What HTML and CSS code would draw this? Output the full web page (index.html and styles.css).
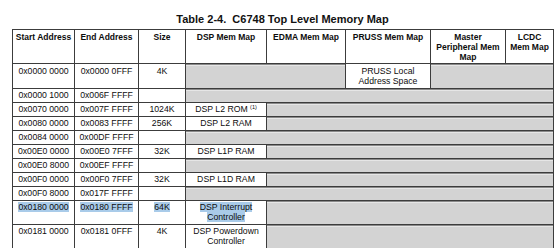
FILE: index.html
```html
<!DOCTYPE html>
<html>
<head>
<meta charset="utf-8">
<link rel="stylesheet" href="styles.css">
</head>
<body>
<div class="wrap">
  <div class="title">Table 2-4.&nbsp; C6748 Top Level Memory Map</div>
  <table class="map">
    <colgroup>
      <col class="c1"><col class="c2"><col class="c3"><col class="c4"><col class="c5"><col class="c6"><col class="c7"><col class="c8">
    </colgroup>
    <thead>
      <tr>
        <th>Start Address</th>
        <th>End Address</th>
        <th>Size</th>
        <th>DSP Mem Map</th>
        <th>EDMA Mem Map</th>
        <th>PRUSS Mem Map</th>
        <th>Master<br>Peripheral Mem<br>Map</th>
        <th>LCDC<br>Mem Map</th>
      </tr>
    </thead>
    <tbody>
      <tr class="first">
        <td>0x0000 0000</td><td>0x0000 0FFF</td><td>4K</td>
        <td class="g" colspan="2"></td>
        <td>PRUSS Local<br>Address Space</td>
        <td class="g" colspan="2"></td>
      </tr>
      <tr>
        <td>0x0000 1000</td><td>0x006F FFFF</td><td></td>
        <td class="g" colspan="5"></td>
      </tr>
      <tr>
        <td>0x0070 0000</td><td>0x007F FFFF</td><td>1024K</td>
        <td>DSP L2 ROM <sup class="fn">(1)</sup></td>
        <td class="g" colspan="4"></td>
      </tr>
      <tr>
        <td>0x0080 0000</td><td>0x0083 FFFF</td><td>256K</td>
        <td>DSP L2 RAM</td>
        <td class="g" colspan="4"></td>
      </tr>
      <tr>
        <td>0x0084 0000</td><td>0x00DF FFFF</td><td></td>
        <td class="g" colspan="5"></td>
      </tr>
      <tr>
        <td>0x00E0 0000</td><td>0x00E0 7FFF</td><td>32K</td>
        <td>DSP L1P RAM</td>
        <td class="g" colspan="4"></td>
      </tr>
      <tr>
        <td>0x00E0 8000</td><td>0x00EF FFFF</td><td></td>
        <td class="g" colspan="5"></td>
      </tr>
      <tr>
        <td>0x00F0 0000</td><td>0x00F0 7FFF</td><td>32K</td>
        <td>DSP L1D RAM</td>
        <td class="g" colspan="4"></td>
      </tr>
      <tr>
        <td>0x00F0 8000</td><td>0x017F FFFF</td><td></td>
        <td class="g" colspan="5"></td>
      </tr>
      <tr>
        <td><span class="sel">0x0180 0000</span></td><td><span class="sel">0x0180 FFFF</span></td><td><span class="sel">64K</span></td>
        <td><span class="sel">DSP Interrupt</span><br><span class="sel">Controller</span></td>
        <td class="g" colspan="4"></td>
      </tr>
      <tr>
        <td>0x0181 0000</td><td>0x0181 0FFF</td><td>4K</td>
        <td>DSP Powerdown<br>Controller</td>
        <td class="g" colspan="4"></td>
      </tr>
    </tbody>
  </table>
</div>
</body>
</html>
```

FILE: styles.css
```css
html, body {
  margin: 0;
  padding: 0;
  background: #ffffff;
}

.wrap {
  padding: 13px 0 0 12px;
  width: 541px;
  font-family: "Liberation Sans", Arial, sans-serif;
  color: #0d0d0d;
}

.title {
  font-size: 11px;
  line-height: 13px;
  font-weight: bold;
  text-align: center;
  color: #111;
  margin-bottom: 3px;
}

.map {
  border-collapse: collapse;
  table-layout: fixed;
  width: 541px;
}

.c1 { width: 62px; }
.c2 { width: 64px; }
.c3 { width: 47px; }
.c4 { width: 81px; }
.c5 { width: 79px; }
.c6 { width: 85px; }
.c7 { width: 75px; }
.c8 { width: 48px; }

.map th,
.map td {
  border: 1px solid #3c3c3c;
  padding: 1px 2px 2px;
  text-align: center;
  vertical-align: top;
  line-height: 10px;
  white-space: nowrap;
  overflow: hidden;
}

.map th {
  font-size: 8.5px;
  font-weight: bold;
  color: #0d0d0d;
  padding-top: 2px;
  padding-bottom: 1px;
  height: 29px;
}

.map td {
  font-size: 8.7px;
  height: 10px;
}

.map tr.first td {
  padding-top: 2px;
}

.map td.g {
  background: #d3d3d3;
  border-top: 1px solid #555;
  box-shadow: inset 0 1px 0 #8a8a8a, inset 0 2px 0 #e6e6e6;
}

.fn {
  font-size: 5.5px;
  vertical-align: 3px;
  line-height: 0;
}

.sel {
  background: #a9cbe9;
}
```
